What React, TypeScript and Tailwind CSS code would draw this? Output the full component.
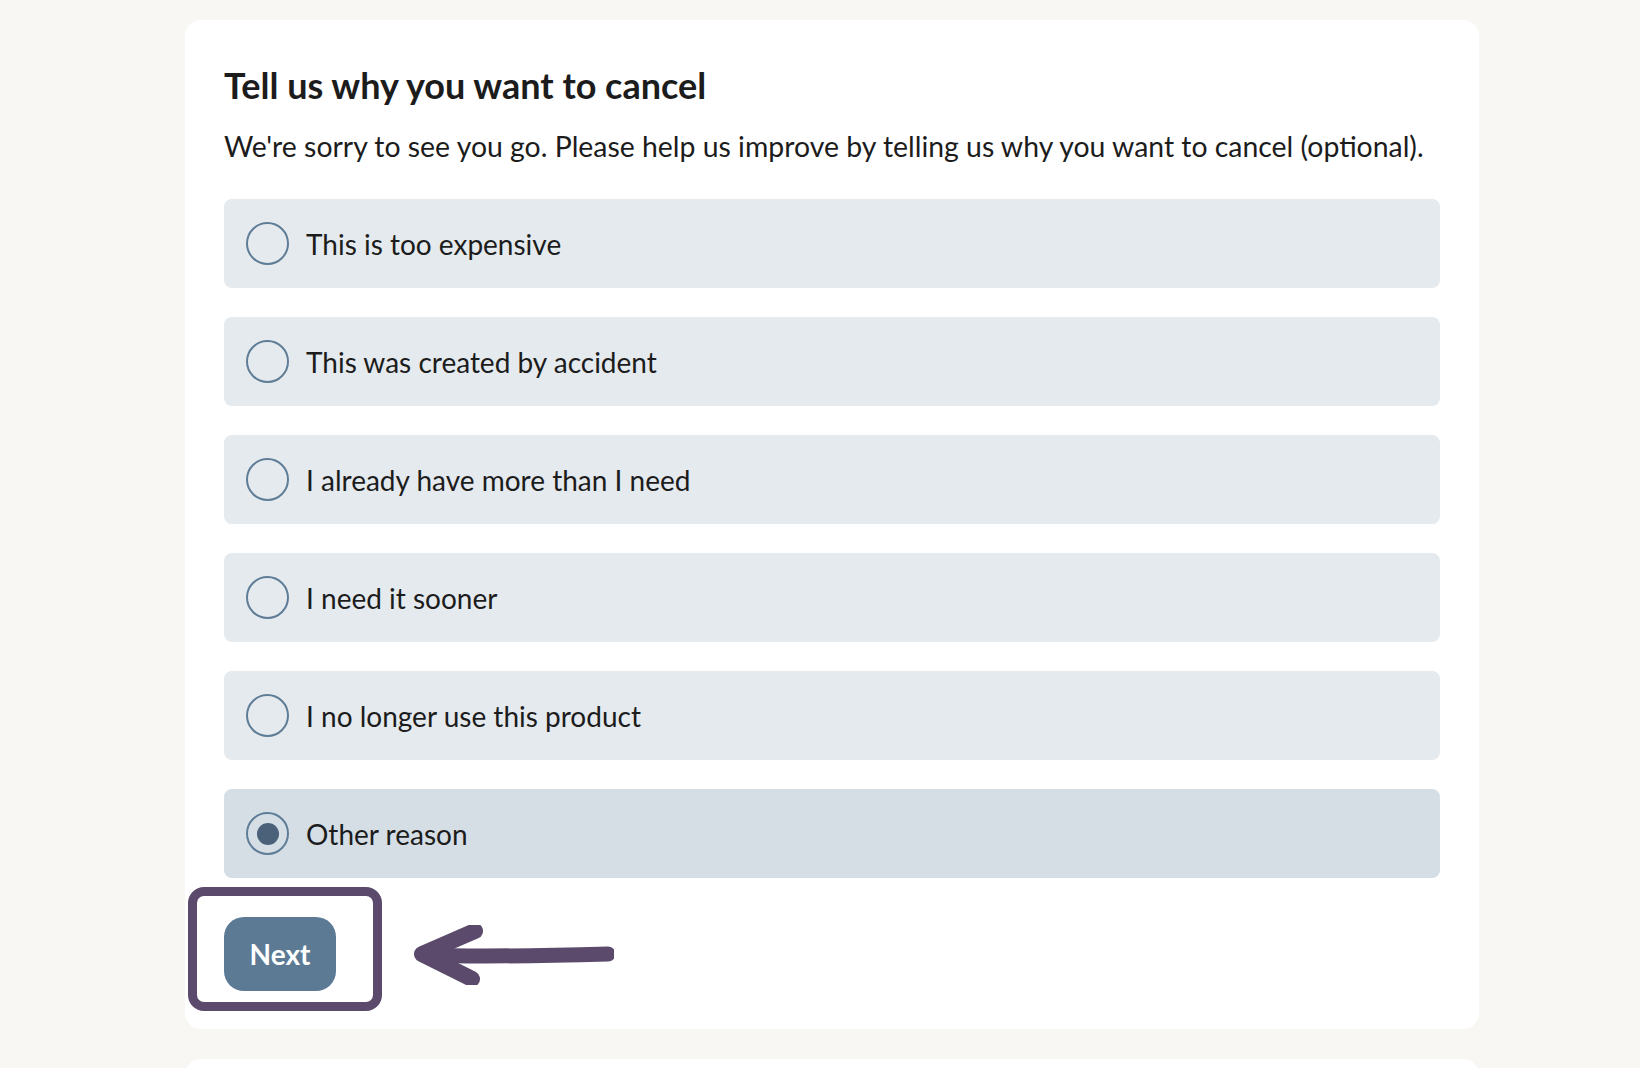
import { useState } from 'react'

const reasons = [
  'This is too expensive',
  'This was created by accident',
  'I already have more than I need',
  'I need it sooner',
  'I no longer use this product',
  'Other reason',
]

function Radio({ checked }: { checked: boolean }) {
  return (
    <span className="flex h-[43px] w-[43px] shrink-0 items-center justify-center rounded-full border-2 border-[#5f7d96] bg-transparent">
      {checked && <span className="h-[22px] w-[22px] rounded-full bg-[#4a6179]" />}
    </span>
  )
}

function HandArrow() {
  return (
    <svg width="200" height="60" viewBox="0 0 200 60" fill="none" className="absolute left-[190px] top-[8px]">
      <path d="M61 6 L8 29 L58 54" stroke="#5b4a6b" strokeWidth="16" strokeLinecap="round" strokeLinejoin="round" />
      <path d="M12 30 C60 32 120 31 194 29" stroke="#5b4a6b" strokeWidth="15" strokeLinecap="round" />
    </svg>
  )
}

export default function App() {
  const [selected, setSelected] = useState(5)

  return (
    <div className="min-h-screen bg-[#f8f7f4] pt-[20px] font-['Lato',_'Open_Sans',_sans-serif] text-[#1c1c1c]">
      <div className="ml-[185px] w-[1294px] rounded-[16px] bg-white px-[39px] pb-[38px] pt-[43px]">
        <h2 className="text-[36px] font-bold leading-[44px]">Tell us why you want to cancel</h2>
        <p className="mt-[21px] text-[28.4px] leading-[36px]">
          We're sorry to see you go. Please help us improve by telling us why you want to cancel (optional).
        </p>

        <div className="mt-[35px] flex flex-col gap-[29px]">
          {reasons.map((r, i) => (
            <button
              key={r}
              type="button"
              onClick={() => setSelected(i)}
              className={
                'flex h-[89px] items-center gap-[17px] rounded-[8px] pl-[22px] text-left ' +
                (selected === i ? 'bg-[#d5dee5]' : 'bg-[#e5eaee]')
              }
            >
              <Radio checked={selected === i} />
              <span className="text-[28px] leading-none">{r}</span>
            </button>
          ))}
        </div>

        <div className="relative mt-[39px] flex">
          <div className="pointer-events-none absolute left-[-36px] top-[-30px] h-[124px] w-[194px] rounded-[16px] border-[9px] border-[#5b4a6b]" />
          <button
            type="button"
            className="h-[74px] w-[112px] rounded-[20px] bg-[#5d7a94] text-[28px] font-bold text-white"
          >
            Next
          </button>
          <HandArrow />
        </div>
      </div>
      <div className="ml-[185px] mt-[30px] h-[40px] w-[1294px] rounded-t-[16px] bg-white" />
    </div>
  )
}
